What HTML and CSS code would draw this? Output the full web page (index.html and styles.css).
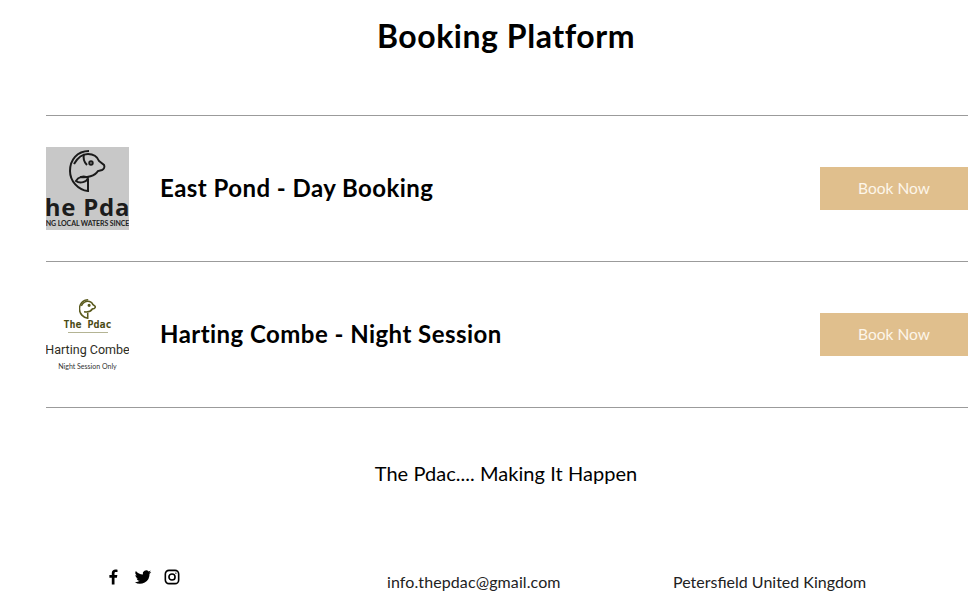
FILE: index.html
```html
<!DOCTYPE html>
<html>
<head>
  <meta charset="UTF-8">
  <title>Booking Platform</title>
  <link rel="stylesheet" href="styles.css">
</head>
<body>
  <h1 class="title">Booking Platform</h1>
  <div class="list">
    <div class="row">
      <div class="thumb thumb-grey">
        <svg class="fish" viewBox="0 0 37 42" width="37" height="42" fill="none" stroke="#1a1a1a" stroke-width="2">
          <path d="M20 1C8 1 1 10 1 21c0 10 8 19 18 20V29"/>
          <path d="M5 14C9 7 14 4 19 4c5 0 9 2 11 7l5 4c1 2 0 4-2 5l-4 1c-3 5-11 7-18 6"/>
          <path d="M7 31c2-4 8-6 12-3-1 4-8 6-12 3z"/>
          <path d="M15 4c-1 4 0 8 3 11"/>
          <circle cx="22" cy="13" r="1.700"/>
        </svg>
        <div class="grey-name">he Pda</div>
        <div class="grey-tag">NG LOCAL WATERS SINCE</div>
      </div>
      <h2 class="row-name">East Pond - Day Booking</h2>
      <a class="book" href="#">Book Now</a>
    </div>
    <div class="row">
      <div class="thumb">
        <svg class="fish-small" viewBox="0 0 37 42" width="17" height="20" fill="none" stroke="#5a5a1e" stroke-width="3.400">
          <path d="M20 1C8 1 1 10 1 21c0 10 8 19 18 20V29"/>
          <path d="M5 14C9 7 14 4 19 4c5 0 9 2 11 7l5 4c1 2 0 4-2 5l-4 1c-3 5-11 7-18 6"/>
          <circle cx="22" cy="13" r="1.700"/>
        </svg>
        <div class="small-name">The Pdac</div>
        <div class="small-rule"></div>
        <div class="small-place">Harting Combe</div>
        <div class="small-note">Night Session Only</div>
      </div>
      <h2 class="row-name">Harting Combe - Night Session</h2>
      <a class="book" href="#">Book Now</a>
    </div>
  </div>
  <p class="strap">The Pdac.... Making It Happen</p>
  <div class="footer">
    <div class="social">
      <svg viewBox="0 0 24 24" width="18" height="18" fill="#000"><path d="M14 22v-9h3.200l.6-3.600H14V7.200c0-1 .4-1.800 1.900-1.800H18V2.200C17.500 2.100 16.300 2 15.200 2 12.500 2 10.400 3.700 10.400 6.700v2.700H7.200V13h3.200v9z"/></svg>
      <svg viewBox="0 0 24 24" width="18" height="18" fill="#000"><path d="M23 5.200c-.8.400-1.700.600-2.600.700.900-.600 1.600-1.400 2-2.500-.900.500-1.800.900-2.900 1.100A4.500 4.500 0 0 0 11.800 8.600 12.800 12.800 0 0 1 2.500 3.900a4.500 4.500 0 0 0 1.400 6c-.700 0-1.400-.200-2-.600 0 2.200 1.500 4.100 3.600 4.500-.700.200-1.400.200-2 .100.600 1.800 2.200 3.100 4.200 3.100A9 9 0 0 1 1 18.900 12.800 12.800 0 0 0 20.700 7.500c.900-.600 1.700-1.400 2.300-2.300z"/></svg>
      <svg viewBox="0 0 24 24" width="16" height="16" fill="none" stroke="#000" stroke-width="2.400"><rect x="2" y="2" width="20" height="20" rx="5.500"/><circle cx="12" cy="12" r="4.600"/><circle cx="17.800" cy="6.200" r="1" fill="#000" stroke="none"/></svg>
    </div>
    <a class="mail" href="#">info.thepdac@gmail.com</a>
    <span class="place">Petersfield United Kingdom</span>
  </div>
</body>
</html>
```

FILE: styles.css
```css
body {
  margin: 0;
  background: #fff;
  color: #000;
  font-family: Lato, "Liberation Sans", sans-serif;
  height: 608px;
  overflow: hidden;
}
.title {
  margin: 0;
  padding-top: 16px;
  height: 115px;
  box-sizing: border-box;
  font-size: 32px;
  line-height: 40px;
  font-weight: 700;
  letter-spacing: 0.55px;
  text-align: center;
  width: 1012px;
}
.list {
  margin: 0 12px 0 46px;
  border-bottom: 1px solid #9b9b9b;
}
.row {
  display: flex;
  align-items: center;
  height: 145px;
  border-top: 1px solid #9b9b9b;
}
.thumb {
  width: 83px;
  height: 83px;
  overflow: hidden;
  display: flex;
  flex-direction: column;
  align-items: center;
  flex-shrink: 0;
  white-space: nowrap;
}
.thumb-grey {
  background: #c8c8c8;
}
.fish {
  margin-top: 3px;
  flex-shrink: 0;
}
.grey-name {
  font-family: "Open Sans", sans-serif;
  font-weight: 700;
  font-size: 24px;
  line-height: 24px;
  letter-spacing: 0.8px;
  margin-top: 3px;
  color: #1c1c1c;
}
.grey-tag {
  font-size: 7px;
  line-height: 9px;
  font-weight: 700;
  letter-spacing: -0.1px;
  color: #222;
}
.fish-small {
  margin-top: 6px;
  flex-shrink: 0;
}
.small-name {
  font-family: "DejaVu Sans Mono", monospace;
  font-weight: 700;
  font-size: 10px;
  line-height: 12px;
  color: #4a4a14;
}
.small-rule {
  width: 40px;
  height: 1px;
  margin-top: 1px;
  background: #b4b494;
}
.small-place {
  font-family: Roboto, sans-serif;
  font-size: 12.500px;
  line-height: 16px;
  margin-top: 9px;
  color: #2e2e1e;
}
.small-note {
  font-size: 7px;
  line-height: 9px;
  margin-top: 4px;
  color: #333;
}
.row-name {
  margin: -2px 0 0 31px;
  font-size: 24px;
  line-height: 30px;
  font-weight: 700;
  letter-spacing: 0.45px;
  flex: 1;
}
.book {
  display: flex;
  align-items: center;
  justify-content: center;
  width: 148px;
  height: 43px;
  padding-bottom: 2px;
  box-sizing: border-box;
  background: #e0bf8d;
  color: #fdf6ea;
  font-size: 15.500px;
  text-decoration: none;
}
.strap {
  margin: 53px 0 0;
  height: 24px;
  font-size: 20px;
  line-height: 24px;
  letter-spacing: 0.05px;
  text-align: center;
  width: 1012px;
}
.footer {
  display: flex;
  align-items: center;
  margin-top: 87px;
  padding-left: 104px;
  font-size: 16px;
  color: #222;
}
.social {
  display: flex;
  align-items: center;
  gap: 12px;
  width: 283px;
  margin-top: -10px;
}
.mail {
  width: 286px;
  letter-spacing: 0.1px;
  color: #222;
  text-decoration: none;
}
```
